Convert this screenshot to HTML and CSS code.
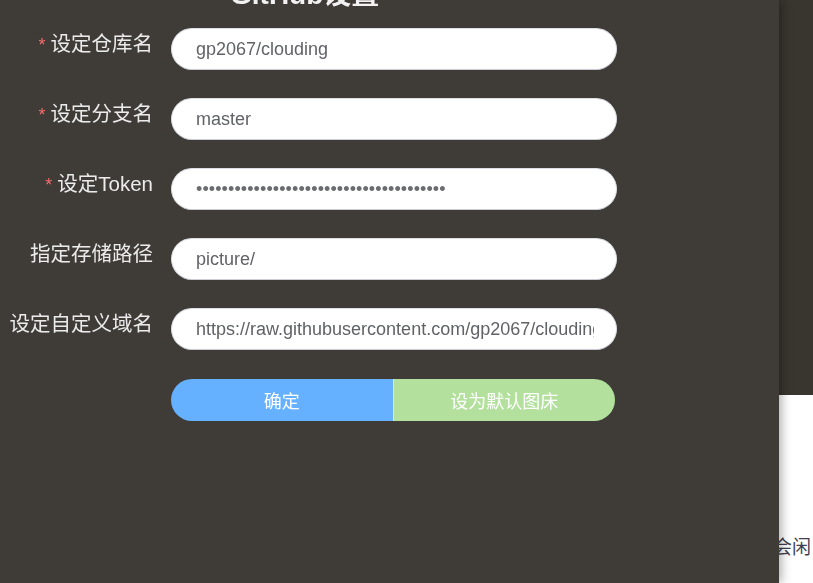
FILE: index.html
```html
<!DOCTYPE html>
<html lang="zh-CN">
<head>
<meta charset="utf-8">
<title>GitHub设置</title>
<link rel="stylesheet" href="styles.css">
</head>
<body>
<div class="page">
  <header class="topbar"></header>
  <main class="content">
    <p class="hint">会闲</p>
  </main>
</div>
<aside class="drawer">
  <h2 class="drawer-title">GitHub设置</h2>
  <form class="form">
    <div class="row">
      <label class="label"><span class="req">*</span>设定仓库名</label>
      <input class="field" type="text" value="gp2067/clouding">
    </div>
    <div class="row">
      <label class="label"><span class="req">*</span>设定分支名</label>
      <input class="field" type="text" value="master">
    </div>
    <div class="row">
      <label class="label"><span class="req">*</span>设定Token</label>
      <input class="field pw" type="password" value="ghp_abcdefghijklmnopqrstuvwxyz012345678">
    </div>
    <div class="row">
      <label class="label">指定存储路径</label>
      <input class="field" type="text" value="picture/">
    </div>
    <div class="row">
      <label class="label">设定自定义域名</label>
      <input class="field" type="text" value="https://raw.githubusercontent.com/gp2067/clouding/master/">
    </div>
    <div class="actions">
      <button type="button" class="btn btn-ok">确定</button>
      <button type="button" class="btn btn-default">设为默认图床</button>
    </div>
  </form>
</aside>
</body>
</html>
```
FILE: styles.css
```css
html, body {
  margin: 0;
  padding: 0;
  height: 100%;
  overflow: hidden;
}
body {
  font-family: "Liberation Sans", "Noto Sans CJK SC", sans-serif;
  background: #ffffff;
}
.page {
  display: flex;
  flex-direction: column;
  height: 100%;
}
.topbar {
  height: 395px;
  background: #39352f;
}
.content {
  padding-top: 138px;
}
.hint {
  margin: 0 0 0 773px;
  font-family: "Noto Sans CJK SC", sans-serif;
  font-size: 19px;
  line-height: 26px;
  color: #3f3f52;
  white-space: nowrap;
}
.drawer {
  position: fixed;
  left: 0;
  top: 0;
  bottom: 0;
  width: 779px;
  background: #3f3b37;
  box-shadow: 2px 0 10px rgba(0, 0, 0, 0.35);
}
.drawer-title {
  margin: -21px 0 0 230px;
  font-family: "Liberation Sans", "Noto Sans CJK SC", sans-serif;
  font-size: 28px;
  line-height: 32px;
  font-weight: bold;
  color: #f2f2f2;
}
.form {
  padding-top: 17px;
}
.row {
  display: flex;
  align-items: flex-start;
  margin-bottom: 28px;
}
.label {
  width: 153px;
  padding-right: 18px;
  text-align: right;
  font-family: "Liberation Sans", "Noto Sans CJK SC", sans-serif;
  font-size: 20.5px;
  line-height: 32px;
  color: #ebebeb;
  white-space: nowrap;
}
.req {
  color: #f56c6c;
  font-size: 18px;
  margin-right: 5px;
}
.field {
  box-sizing: border-box;
  width: 446px;
  height: 42px;
  margin: 0;
  padding: 0 22px 0 24px;
  border: 1px solid #dcdfe6;
  border-bottom-color: #c9ccd4;
  border-radius: 21px;
  background: #ffffff;
  font-family: "Liberation Sans", "Noto Sans CJK SC", sans-serif;
  font-size: 18px;
  color: #606266;
  outline: none;
}
.pw {
  letter-spacing: 0.1px;
  color: #6a6c70;
}
.actions {
  display: flex;
  margin: 29px 0 0 171px;
  width: 444px;
}
.btn {
  flex: 1;
  height: 42px;
  margin: 0;
  border: none;
  font-family: "Noto Sans CJK SC", sans-serif;
  font-size: 18px;
  color: #ffffff;
  cursor: pointer;
}
.btn-ok {
  background: #66b1ff;
  border-radius: 21px 0 0 21px;
  border-right: 1px solid #d8efc8;
}
.btn-default {
  background: #b3e19d;
  border-radius: 0 21px 21px 0;
}
```
